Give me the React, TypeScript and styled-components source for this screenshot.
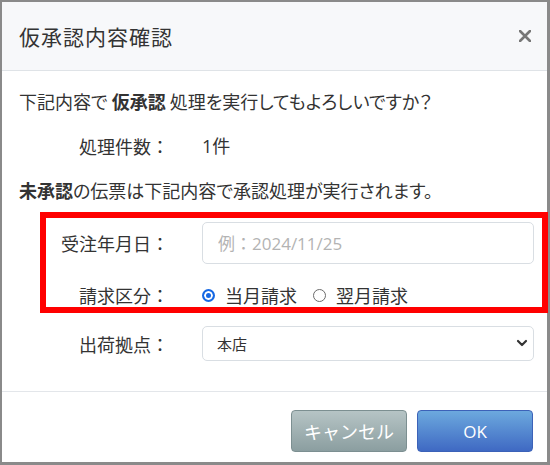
import React from "react";
import styled, { createGlobalStyle } from "styled-components";

const Global = createGlobalStyle`
  html, body { margin: 0; padding: 0; background: #fff; }
  body { font-family: "Noto Sans CJK JP", "Noto Sans", sans-serif; color: #333; }
  * { box-sizing: border-box; }
`;

const JP = `"Segoe UI", "Open Sans", "Noto Sans CJK JP", sans-serif`;

const Frame = styled.div`
  position: relative;
  width: 550px;
  height: 465px;
  border-style: solid;
  border-color: #8a8a8a;
  border-width: 2px 3px 3px 2px;
  background: #fff;
  display: flex;
  flex-direction: column;
`;

const Header = styled.div`
  height: 69px;
  flex: none;
  background: #f7f8fa;
  border-bottom: 1px solid #dfe3e7;
  display: flex;
  align-items: center;
  justify-content: space-between;
  padding: 0 16px 0 17px;
`;

const Title = styled.h1`
  margin: 0;
  font-family: "Noto Sans CJK JP", sans-serif;
  font-weight: 400;
  font-size: 21px;
  line-height: 28px;
  color: #333;
  letter-spacing: 1px;
`;

const Close = styled.button`
  border: 0;
  background: none;
  padding: 0;
  width: 12px;
  height: 12px;
  display: flex;
  cursor: pointer;
`;

const Body = styled.div`
  flex: 1;
  padding: 18px 13px 0 17px;
  display: flex;
  flex-direction: column;
`;

const Text = styled.p<{ $gap?: number }>`
  margin: ${(p) => p.$gap ?? 0}px 0 0;
  font-size: 18px;
  line-height: 24px;
  color: #333;
  font-feature-settings: "palt";
  b { font-weight: 700; }
`;

const Row = styled.div<{ $gap: number; $h: number }>`
  margin-top: ${(p) => p.$gap}px;
  display: grid;
  grid-template-columns: 150px 1fr;
  column-gap: 33px;
  align-items: center;
  min-height: ${(p) => p.$h}px;
`;

const Label = styled.span`
  font-size: 18px;
  line-height: 24px;
  text-align: right;
  color: #333;
`;

const Value = styled.span`
  font-size: 18px;
  line-height: 24px;
  color: #333;
  font-family: ${JP};
`;

const Input = styled.input`
  width: 100%;
  height: 42px;
  border: 1px solid #d9dee3;
  border-radius: 5px;
  padding: 0 15px;
  font-family: ${JP};
  font-size: 17px;
  color: #333;
  outline: none;
  &::placeholder { color: #b3b3b3; }
`;

const Radios = styled.div`
  display: flex;
  align-items: center;
`;

const RadioLabel = styled.label`
  display: flex;
  align-items: center;
  font-size: 18px;
  line-height: 24px;
  color: #333;
  margin-right: 16px;
  cursor: pointer;
`;

const RadioDot = styled.input`
  appearance: none;
  margin: 0 10px 0 0;
  width: 13px;
  height: 13px;
  border-radius: 50%;
  border: 1px solid #6b6b6b;
  background: #fff;
  &:checked {
    border: 2px solid #1668e3;
    background: #1668e3;
    box-shadow: inset 0 0 0 2px #fff;
  }
`;

const SelectWrap = styled.div`
  position: relative;
  height: 35px;
`;

const Select = styled.select`
  appearance: none;
  width: 100%;
  height: 35px;
  border: 1px solid #d9dee3;
  border-radius: 5px;
  padding: 0 14px;
  font-family: "Noto Sans CJK JP", sans-serif;
  font-size: 15px;
  color: #333;
  background: #fff;
  outline: none;
`;

const Chevron = styled.svg`
  position: absolute;
  right: 6px;
  top: 12px;
  pointer-events: none;
`;

const Footer = styled.div`
  height: 71px;
  flex: none;
  border-top: 1px solid #e3e6ea;
  display: flex;
  justify-content: flex-end;
  align-items: flex-start;
  gap: 10px;
  padding: 18px 14px 0 0;
`;

const Button = styled.button<{ $primary?: boolean }>`
  width: 116px;
  height: 42px;
  border-radius: 4px;
  border: 1px solid ${(p) => (p.$primary ? "#3c62b8" : "#7c8f91")};
  background: ${(p) =>
    p.$primary
      ? "linear-gradient(#6ca9de, #3f69c3)"
      : "linear-gradient(#b6c4c5, #8b9ea0)"};
  color: #fff;
  font-family: ${JP};
  font-size: ${(p) => (p.$primary ? 17 : 18)}px;
  cursor: pointer;
  padding: 0;
`;

const Highlight = styled.div`
  position: absolute;
  left: 38px;
  top: 210px;
  width: 508px;
  height: 101px;
  border: 6px solid #ff0000;
  pointer-events: none;
`;

export default function App() {
  return (
    <>
      <Global />
      <Frame>
        <Header>
          <Title>仮承認内容確認</Title>
          <Close aria-label="close">
            <svg width="12" height="12" viewBox="0 0 12 12">
              <path d="M1 1L11 11M11 1L1 11" stroke="#777" strokeWidth="2.6" strokeLinecap="round" />
            </svg>
          </Close>
        </Header>
        <Body>
          <Text>
            下記内容で <b>仮承認</b> 処理を実行してもよろしいですか？
          </Text>
          <Row $gap={21} $h={24}>
            <Label>処理件数：</Label>
            <Value>1件</Value>
          </Row>
          <Text $gap={20}>
            <b>未承認</b>の伝票は下記内容で承認処理が実行されます。
          </Text>
          <Row $gap={20} $h={42}>
            <Label>受注年月日：</Label>
            <Input placeholder="例：2024/11/25" />
          </Row>
          <Row $gap={19} $h={24}>
            <Label>請求区分：</Label>
            <Radios>
              <RadioLabel>
                <RadioDot type="radio" name="bill" defaultChecked />
                当月請求
              </RadioLabel>
              <RadioLabel>
                <RadioDot type="radio" name="bill" />
                翌月請求
              </RadioLabel>
            </Radios>
          </Row>
          <Row $gap={19} $h={35}>
            <Label>出荷拠点：</Label>
            <SelectWrap>
              <Select defaultValue="本店">
                <option>本店</option>
              </Select>
              <Chevron width="12" height="10" viewBox="0 0 12 10">
                <path d="M2 3L6 7L10 3" fill="none" stroke="#333" strokeWidth="2.2" strokeLinecap="round" strokeLinejoin="round" />
              </Chevron>
            </SelectWrap>
          </Row>
        </Body>
        <Footer>
          <Button>キャンセル</Button>
          <Button $primary>OK</Button>
        </Footer>
        <Highlight />
      </Frame>
    </>
  );
}
